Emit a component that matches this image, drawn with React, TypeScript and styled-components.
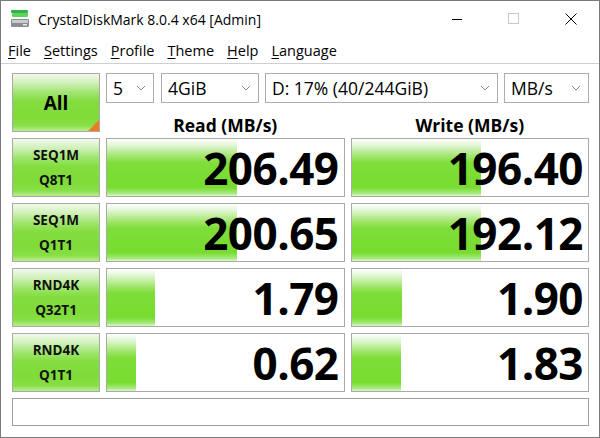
import styled, { createGlobalStyle } from "styled-components";

type Result = {
    line1: string;
    line2: string;
    read: string;
    readFill: number;
    write: string;
    writeFill: number;
}

const results: Result[] = [
    { line1: "SEQ1M", line2: "Q8T1", read: "206.49", readFill: 130, write: "196.40", writeFill: 129 },
    { line1: "SEQ1M", line2: "Q1T1", read: "200.65", readFill: 130, write: "192.12", writeFill: 129 },
    { line1: "RND4K", line2: "Q32T1", read: "1.79", readFill: 48, write: "1.90", writeFill: 50 },
    { line1: "RND4K", line2: "Q1T1", read: "0.62", readFill: 29, write: "1.83", writeFill: 49 },
];

const menus = ["File", "Settings", "Profile", "Theme", "Help", "Language"];

const GlobalStyle = createGlobalStyle`
    html, body {
        margin: 0;
        padding: 0;
        background: #ffffff;
    }
    body {
        font-family: "Open Sans", "Noto Sans", sans-serif;
        color: #000;
    }
`;

function AppIcon() {
    return (
        <svg width="20" height="20" viewBox="0 0 20 20">
            <rect x="1" y="1" width="17" height="3" rx="1" fill="#2fb34a" />
            <rect x="2" y="4" width="16" height="4" rx="1" fill="#5fd35a" />
            <rect x="1" y="10" width="18" height="8" rx="1" fill="#8a8f93" />
            <rect x="2" y="11" width="16" height="3" fill="#c9ccce" />
            <rect x="13" y="15" width="4" height="1.5" fill="#e8e8e8" />
        </svg>
    );
}

function Chevron() {
    return (
        <svg width="10" height="6" viewBox="0 0 10 6">
            <path d="M1 1 L5 5 L9 1" fill="none" stroke="#8a8a8a" strokeWidth="1" />
        </svg>
    );
}

export default function App() {
    return (
        <>
            <GlobalStyle />
            <Window>
                <TitleBar>
                    <AppIcon />
                    <Title>CrystalDiskMark 8.0.4 x64 [Admin]</Title>
                    <Controls>
                        <CtlButton>
                            <svg width="12" height="12" viewBox="0 0 12 12"><path d="M1 6.5 H11" stroke="#000" strokeWidth="1" /></svg>
                        </CtlButton>
                        <CtlButton>
                            <svg width="12" height="12" viewBox="0 0 12 12"><rect x="0.5" y="0.5" width="10" height="10" fill="none" stroke="#c8c8c8" strokeWidth="1" /></svg>
                        </CtlButton>
                        <CtlButton>
                            <svg width="12" height="12" viewBox="0 0 12 12"><path d="M0.5 0.5 L11.5 11.5 M11.5 0.5 L0.5 11.5" stroke="#000" strokeWidth="1" /></svg>
                        </CtlButton>
                    </Controls>
                </TitleBar>

                <MenuBar>
                    {menus.map((m) => (
                        <MenuItem key={m}><u>{m[0]}</u>{m.slice(1)}</MenuItem>
                    ))}
                </MenuBar>

                <Client>
                    <AllButton>All</AllButton>
                    <TopRight>
                        <Combos>
                            <Combo width={48}><span>5</span><Chevron /></Combo>
                            <Combo width={98}><span>4GiB</span><Chevron /></Combo>
                            <Combo width={233}><span>D: 17% (40/244GiB)</span><Chevron /></Combo>
                            <Combo width={85}><span>MB/s</span><Chevron /></Combo>
                        </Combos>
                        <Headers>
                            <Header>Read (MB/s)</Header>
                            <Header>Write (MB/s)</Header>
                        </Headers>
                    </TopRight>

                    {results.map((r) => (
                        <Row key={r.line1 + r.line2}>
                            <TestButton>
                                <span>{r.line1}</span>
                                <span>{r.line2}</span>
                            </TestButton>
                            <Meter>
                                <Fill style={{ width: r.readFill }} />
                                <Value>{r.read}</Value>
                            </Meter>
                            <Meter>
                                <Fill style={{ width: r.writeFill }} />
                                <Value>{r.write}</Value>
                            </Meter>
                        </Row>
                    ))}

                    <StatusBar />
                </Client>
            </Window>
        </>
    );
}

const Window = styled.div`
    width: 600px;
    height: 438px;
    box-sizing: border-box;
    border: 1px solid #7a7a7a;
    background: #ffffff;
    display: flex;
    flex-direction: column;
    overflow: hidden;
`;

const TitleBar = styled.div`
    height: 36px;
    display: flex;
    align-items: center;
    padding-left: 9px;
    flex-shrink: 0;

    svg {
        flex-shrink: 0;
    }
`;

const Title = styled.div`
    margin-left: 8px;
    font-size: 14px;
    color: #000;
    flex: 1;
    white-space: nowrap;
`;

const Controls = styled.div`
    display: flex;
    height: 100%;
`;

const CtlButton = styled.div`
    width: 57px;
    display: flex;
    align-items: center;
    justify-content: center;
`;

const MenuBar = styled.div`
    height: 26px;
    display: flex;
    align-items: center;
    padding-left: 7px;
    gap: 13px;
    border-bottom: 1px solid #cfcfcf;
    flex-shrink: 0;
`;

const MenuItem = styled.span`
    font-size: 14.5px;
    color: #000;

    u {
        text-decoration: underline;
        text-underline-offset: 2px;
    }
`;

const Client = styled.div`
    display: grid;
    grid-template-columns: 88px 1fr;
    row-gap: 6px;
    column-gap: 6px;
    padding: 9px 10px 0 11px;
`;

const greenButton = `
    background: linear-gradient(
        to bottom,
        #f1f9ec 0%,
        #d2f1bc 15%,
        #a2e572 32%,
        #84dd40 48%,
        #7fdc38 75%,
        #88df45 90%,
        #b9ec94 100%
    );
    border: 1px solid #a9a9a9;
    box-sizing: border-box;
`;

const AllButton = styled.div`
    ${greenButton}
    height: 59px;
    position: relative;
    display: flex;
    align-items: center;
    justify-content: center;
    font-size: 19px;
    font-weight: 700;

    &::after {
        content: "";
        position: absolute;
        right: 0;
        bottom: 0;
        border-style: solid;
        border-width: 0 0 11px 11px;
        border-color: transparent transparent #f07a1e transparent;
    }
`;

const TopRight = styled.div`
    display: flex;
    flex-direction: column;
    height: 59px;
`;

const Combos = styled.div`
    display: flex;
    gap: 6px;
    height: 30px;
    flex-shrink: 0;
`;

const Combo = styled.div<{ width: number }>`
    width: ${(p) => p.width}px;
    box-sizing: border-box;
    border: 1px solid #adadad;
    background: #ffffff;
    display: flex;
    align-items: center;
    justify-content: space-between;
    padding: 0 7px 0 6px;
    font-size: 17.5px;
    white-space: nowrap;

    &:first-child {
        margin-right: 1px;
    }
`;

const Headers = styled.div`
    display: grid;
    grid-template-columns: 1fr 1fr;
    gap: 6px;
    height: 29px;
    padding-top: 12px;
    box-sizing: border-box;
    overflow: visible;
`;

const Header = styled.div`
    text-align: center;
    font-size: 17.5px;
    font-weight: 700;
    line-height: 20px;
    height: 20px;
`;

const Row = styled.div`
    grid-column: 1 / -1;
    display: grid;
    grid-template-columns: 88px 1fr 1fr;
    gap: 6px;
    height: 59px;
`;

const TestButton = styled.div`
    ${greenButton}
    display: flex;
    flex-direction: column;
    align-items: center;
    justify-content: center;
    gap: 6px;
    font-size: 13.5px;
    font-weight: 700;
    line-height: 1.4;
    color: #111;
`;

const Meter = styled.div`
    position: relative;
    box-sizing: border-box;
    border: 1px solid #a9a9a9;
    background: #ffffff;
    overflow: hidden;
`;

const Fill = styled.div`
    position: absolute;
    left: 0;
    top: 0;
    bottom: 0;
    background: linear-gradient(
        to bottom,
        #ffffff 0%,
        #e0f5d2 12%,
        #a8e878 28%,
        #7ede38 42%,
        #78dc30 85%,
        #a4e97a 95%,
        #dff6cf 100%
    );
`;

const Value = styled.div`
    position: relative;
    height: 100%;
    display: flex;
    align-items: center;
    justify-content: flex-end;
    padding-right: 5px;
    font-size: 44px;
    font-weight: 700;
    letter-spacing: -0.5px;
    color: #000;
`;

const StatusBar = styled.div`
    grid-column: 1 / -1;
    height: 28px;
    box-sizing: border-box;
    border: 1px solid #a0a0a0;
    background: #ffffff;
`;
